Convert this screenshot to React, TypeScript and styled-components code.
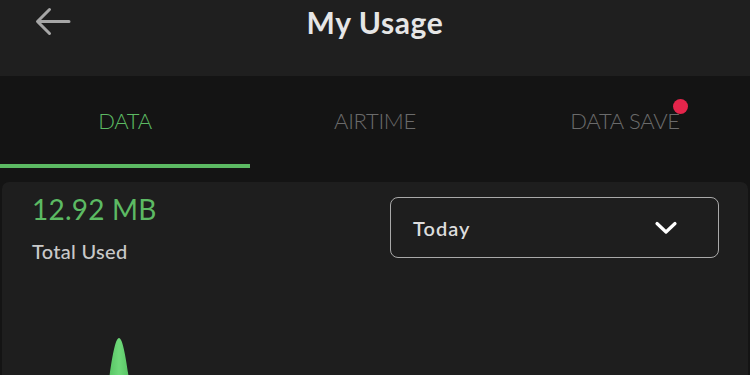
import React from 'react';
import styled, {createGlobalStyle} from 'styled-components';

const GlobalStyle = createGlobalStyle`
  html, body {
    margin: 0;
    padding: 0;
    background: #141414;
    overflow: hidden;
    font-family: Lato, 'Open Sans', sans-serif;
  }
`;

const Screen = styled.div`
  width: 750px;
  height: 375px;
  display: flex;
  flex-direction: column;
  background: #141414;
  overflow: hidden;
`;

const Header = styled.header`
  position: relative;
  height: 76px;
  flex-shrink: 0;
  background: #1f1f1f;
  display: flex;
  justify-content: center;
  align-items: flex-start;
  padding-top: 3px;
  box-sizing: border-box;
`;

const BackButton = styled.button`
  position: absolute;
  left: 34px;
  top: 5px;
  width: 38px;
  height: 34px;
  padding: 0;
  border: none;
  background: transparent;
  display: flex;
  align-items: center;
  justify-content: center;
`;

const Title = styled.h1`
  margin: 0;
  font-size: 30px;
  line-height: 38px;
  font-weight: 700;
  letter-spacing: 0.6px;
  color: #e6e6e6;
`;

const TabBar = styled.nav`
  display: flex;
  flex-shrink: 0;
  padding-bottom: 14px;
  background: #141414;
`;

const Tab = styled.div<{active?: boolean}>`
  flex: 1;
  height: 92px;
  display: flex;
  align-items: center;
  justify-content: center;
  box-sizing: border-box;
  border-bottom: 4px solid ${p => (p.active ? '#5cba63' : 'transparent')};
`;

const TabLabel = styled.span<{active?: boolean}>`
  position: relative;
  font-size: 22px;
  font-weight: 300;
  letter-spacing: -0.3px;
  color: ${p => (p.active ? '#5cba63' : '#6b6b6b')};
`;

const Badge = styled.span`
  position: absolute;
  right: -8px;
  top: -8px;
  width: 15px;
  height: 15px;
  border-radius: 50%;
  background: #e5254b;
`;

const Card = styled.section`
  flex: 1;
  margin: 0 2px;
  background: #1e1e1e;
  border-radius: 7px 7px 0 0;
  display: flex;
  flex-direction: column;
`;

const SummaryRow = styled.div`
  display: flex;
  justify-content: space-between;
  align-items: flex-start;
  padding: 12px 29px 0 30px;
`;

const Totals = styled.div`
  display: flex;
  flex-direction: column;
`;

const Amount = styled.div`
  font-size: 28px;
  line-height: 30px;
  font-weight: 400;
  color: #5cba63;
  letter-spacing: 0.2px;
`;

const AmountLabel = styled.div`
  margin-top: 15px;
  font-size: 20px;
  line-height: 24px;
  font-weight: 500;
  color: #c9c9c9;
  letter-spacing: 0.3px;
`;

const Select = styled.div`
  width: 329px;
  height: 61px;
  margin-top: 3px;
  box-sizing: border-box;
  border: 1.5px solid #a9a9a9;
  border-radius: 8px;
  display: flex;
  align-items: center;
  justify-content: space-between;
  padding: 0 40px 0 22px;
`;

const SelectValue = styled.span`
  font-size: 20px;
  font-weight: 600;
  color: #dcdcdc;
  letter-spacing: 1px;
`;

const Chart = styled.svg`
  display: block;
  width: 746px;
  height: 200px;
  flex-shrink: 0;
`;

const BackArrow = () => (
  <svg width="38" height="34" viewBox="0 0 38 34" fill="none">
    <path
      d="M35 16.5H4M15.5 4.5L3.5 16.5L15.5 28.5"
      stroke="#a6a6a6"
      strokeWidth="3"
      strokeLinecap="round"
      strokeLinejoin="round"
    />
  </svg>
);

const Chevron = () => (
  <svg width="24" height="16" viewBox="0 0 24 16" fill="none">
    <path
      d="M3 3.5L12 12L21 3.5"
      stroke="#ffffff"
      strokeWidth="3.2"
      strokeLinecap="round"
      strokeLinejoin="round"
    />
  </svg>
);

const tabs = [
  {label: 'DATA', active: true},
  {label: 'AIRTIME'},
  {label: 'DATA SAVE', badge: true},
];

export default function App() {
  return (
    <Screen>
      <GlobalStyle />
      <Header>
        <BackButton aria-label="Back">
          <BackArrow />
        </BackButton>
        <Title>My Usage</Title>
      </Header>
      <TabBar>
        {tabs.map(t => (
          <Tab key={t.label} active={t.active}>
            <TabLabel active={t.active}>
              {t.label}
              {t.badge && <Badge />}
            </TabLabel>
          </Tab>
        ))}
      </TabBar>
      <Card>
        <SummaryRow>
          <Totals>
            <Amount>12.92 MB</Amount>
            <AmountLabel>Total Used</AmountLabel>
          </Totals>
          <Select>
            <SelectValue>Today</SelectValue>
            <Chevron />
          </Select>
        </SummaryRow>
        <Chart viewBox="0 0 746 200">
          <defs>
            <linearGradient id="spike" x1="0" x2="1" y1="0" y2="0">
              <stop offset="0" stopColor="#3fae4c" />
              <stop offset="0.5" stopColor="#6fd97a" />
              <stop offset="1" stopColor="#3fae4c" />
            </linearGradient>
          </defs>
          <path
            d="M96 200 C106 125 111 75 117 75 C123 75 128 125 138 200 Z"
            fill="url(#spike)"
          />
        </Chart>
      </Card>
    </Screen>
  );
}
